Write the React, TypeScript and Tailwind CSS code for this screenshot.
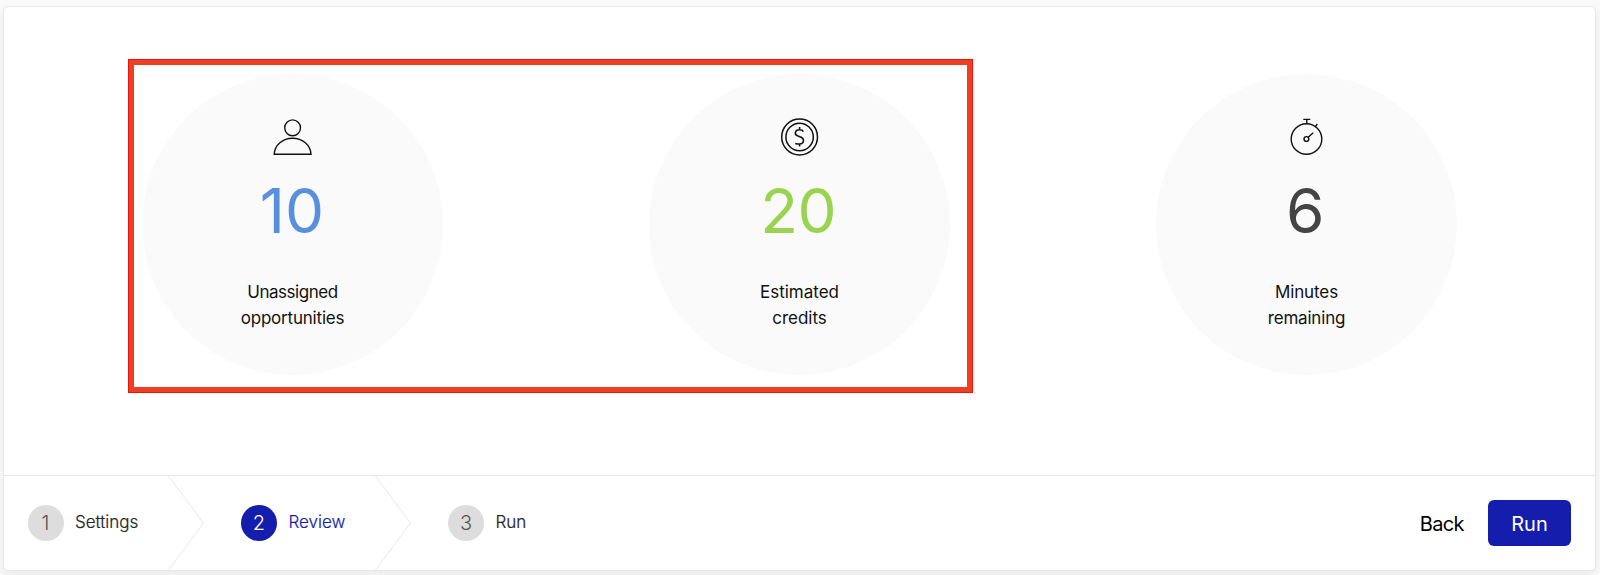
import type { ReactNode } from 'react';
import clsx from 'clsx';

type Stat = {
  icon: ReactNode;
  value: string;
  valueClass: string;
  lines: { text: string; className: string }[];
};

type Step = {
  number: number;
  label: string;
  labelClass: string;
  widthClass: string;
  active?: boolean;
};

const PersonIcon = () => (
  <svg width="40" height="40" viewBox="0 0 40 40" fill="none" stroke="#111" strokeWidth="1.4">
    <circle cx="19.6" cy="10.8" r="7.9" />
    <path d="M1.2 37.2C1.8 28 9.6 21.3 19.6 21.3S37.4 28 38 37.2Z" />
  </svg>
);

const CoinIcon = () => (
  <svg width="40" height="40" viewBox="0 0 40 40" fill="none" stroke="#111" strokeWidth="1.5">
    <circle cx="19.6" cy="20" r="17.9" />
    <circle cx="19.6" cy="20" r="13.7" />
    <path d="M23.4 14.6C22.8 13.4 21.6 12.8 19.4 12.8C14.6 12.8 14.2 17.6 17.4 18.8L21 20.2C24.8 21.8 24.2 27 19.6 27C17.6 27 16.6 26.8 15.2 26.6M19.6 10.1V12.8M19.6 27V29.6" />
  </svg>
);

const StopwatchIcon = () => (
  <svg width="40" height="40" viewBox="0 0 40 40" fill="none" stroke="#111" strokeWidth="1.4">
    <circle cx="19.5" cy="22" r="15.3" />
    <circle cx="19.4" cy="22" r="2.4" />
    <path d="M21.2 20.2L26.2 15.8M16.3 2.4H23.3M19.8 2.4V6.8M28.2 9.8L30.3 7" />
  </svg>
);

const stats: Stat[] = [
  {
    icon: <PersonIcon />,
    value: '10',
    valueClass: 'text-[#5890dd] pr-px',
    lines: [
      { text: 'Unassigned', className: '-tracking-[0.45px]' },
      { text: 'opportunities', className: '-tracking-[0.2px]' },
    ],
  },
  {
    icon: <CoinIcon />,
    value: '20',
    valueClass: 'text-[#99d350] -tracking-[0.5px] pr-[2.5px]',
    lines: [
      { text: 'Estimated', className: '' },
      { text: 'credits', className: '' },
    ],
  },
  {
    icon: <StopwatchIcon />,
    value: '6',
    valueClass: 'text-[#444444] pr-[2.5px]',
    lines: [
      { text: 'Minutes', className: '-tracking-[0.1px]' },
      { text: 'remaining', className: '-tracking-[0.2px]' },
    ],
  },
];

const steps: Step[] = [
  { number: 1, label: 'Settings', labelClass: 'text-[#222]', widthClass: 'w-[213.5px]' },
  { number: 2, label: 'Review', labelClass: 'text-[#151eac]', widthClass: 'w-[207px]', active: true },
  { number: 3, label: 'Run', labelClass: 'text-[#222]', widthClass: 'w-[207px]' },
];

function StatCircle({ icon, value, valueClass, lines }: Stat) {
  return (
    <div className="flex h-[301px] w-[301px] flex-col items-center rounded-full bg-[#fafafa] pt-[43px]">
      {icon}
      <div className={clsx('mt-[22px] text-[62px] leading-[64px]', valueClass)}>{value}</div>
      <div className="mt-[37px] text-center text-[17px] leading-[25.5px] text-[#111]">
        {lines.map((line) => (
          <div key={line.text} className={line.className}>{line.text}</div>
        ))}
      </div>
    </div>
  );
}

function StepItem({ step, last }: { step: Step; last: boolean }) {
  return (
    <div className={clsx('flex items-center', step.widthClass)}>
      <div
        className={clsx(
          'flex h-9 w-9 items-center justify-center rounded-full text-xl font-light',
          step.active ? 'bg-[#151eac] text-white' : 'bg-[#dddddd] text-[#555]'
        )}
      >
        {step.number}
      </div>
      <span
        className={clsx(
          'mb-0.5 ml-[11.5px] text-[17px] leading-6 font-light [-webkit-text-stroke:0.2px_currentColor]',
          step.labelClass
        )}
      >
        {step.label}
      </span>
      {!last && (
        <svg className="mr-[37px] ml-auto" width="36" height="94" viewBox="0 0 36 94" fill="none" stroke="#e5e8ea">
          <path d="M0.5 0L35.5 47L0.5 94" />
        </svg>
      )}
    </div>
  );
}

export default function App() {
  return (
    <div className="h-[575px] w-[1600px] overflow-hidden bg-[#fafafa] pt-1.5 pl-[3px] font-['Inter',sans-serif]">
      <div className="relative flex h-[565px] w-[1593px] flex-col rounded-[5px] border border-[#e4e9ea] bg-white shadow-[0_3px_8px_rgba(0,0,0,0.07)]">
        {/* Stats */}
        <div className="grid h-[468px] grid-cols-3 justify-items-center px-[35px] pt-[67.4px]">
          {stats.map((stat) => (
            <StatCircle key={stat.value} {...stat} />
          ))}
        </div>

        {/* Highlight over the first two stats */}
        <div className="absolute top-[52px] left-[124px] h-[334px] w-[845px] border border-[#ea1408]">
          <div className="h-full w-full border-5 border-[#ee3f24]" />
        </div>

        {/* Steps and actions */}
        <div className="flex h-[95px] items-center justify-between border-t border-[#e5e8ea] pr-6 pl-[23.5px]">
          <div className="flex">
            {steps.map((step, i) => (
              <StepItem key={step.number} step={step} last={i === steps.length - 1} />
            ))}
          </div>
          <div className="flex items-center text-xl">
            <button className="mt-px mr-6 -tracking-[0.6px] text-black">Back</button>
            <button className="h-[46px] w-[83px] rounded-md bg-[#151eac] pt-px text-white">Run</button>
          </div>
        </div>
      </div>
    </div>
  );
}
